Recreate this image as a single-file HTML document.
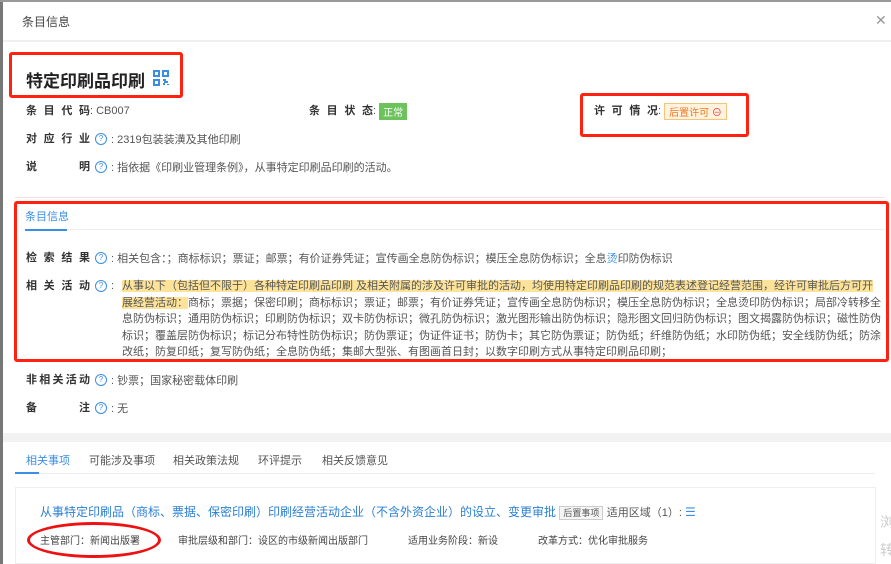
<!DOCTYPE html>
<html><head><meta charset="utf-8"><style>
*{margin:0;padding:0;box-sizing:border-box}
body{width:891px;height:564px;overflow:hidden;background:#fff;font-family:"Liberation Sans","Noto Sans CJK SC",sans-serif;font-size:11px;color:#555;position:relative}
.a{position:absolute;white-space:nowrap}
.r{position:absolute;display:flex;align-items:center;white-space:nowrap;height:14px}
.lbl{display:inline-block;width:64px;height:14px;line-height:14px;color:#333;font-weight:bold;text-align:justify;text-align-last:justify}
.q{display:inline-block;width:12px;height:12px;border:1px solid #3a8ee6;border-radius:50%;color:#3a8ee6;font-size:8px;line-height:10px;text-align:center;font-weight:normal;margin:0 4px 0 5px}
.red{position:absolute;border:3px solid #f21;border-radius:3px}
</style></head><body>
<div class="a" style="left:0;top:0;width:3px;height:564px;background:#777"></div>
<div class="a" style="left:0;top:0;width:891px;height:2px;background:#999"></div>
<div class="a" style="left:22px;top:13px;font-size:12px;color:#444">条目信息</div>
<div class="a" style="left:875px;top:12px;font-size:14px;color:#999">✕</div>
<div class="a" style="left:3px;top:40px;width:888px;height:2px;background:#f0f0f0"></div>

<div class="red" style="left:9px;top:52px;width:174px;height:46px"></div>
<div class="a" style="left:26px;top:67px;font-size:17px;font-weight:bold;color:#222">特定印刷品印刷</div>
<svg class="a" style="left:153px;top:70px" width="16" height="16" viewBox="0 0 16 16" fill="none" stroke="#3a8ee6" stroke-width="2"><rect x="1" y="1" width="5" height="5"/><rect x="10" y="1" width="5" height="5"/><rect x="1" y="10" width="5" height="5"/><path d="M10 10h2v2h3M10 14h2M15 14v1"/></svg>

<div class="r" style="left:26px;top:104px"><span class="lbl">条目代码</span>: CB007</div>
<div class="r" style="left:309px;top:104px"><span class="lbl">条目状态</span>:&nbsp;<span style="background:#6cc35b;color:#fff;padding:1px 4px;font-size:10px">正常</span></div>
<div class="red" style="left:580px;top:93px;width:169px;height:44px"></div>
<div class="r" style="left:594px;top:104px"><span class="lbl">许可情况</span>:&nbsp;<span style="background:#fff3e0;border:1px solid #f5c67a;color:#f07a20;padding:0 4px;font-size:10px">后置许可 <span style="color:#e33">⊖</span></span></div>
<div class="r" style="left:26px;top:132px"><span class="lbl">对应行业</span><span class="q">?</span>: 2319包装装潢及其他印刷</div>
<div class="r" style="left:26px;top:160px"><span class="lbl">说明</span><span class="q">?</span>: 指依据《印刷业管理条例》，从事特定印刷品印刷的活动。</div>
<div class="a" style="left:15px;top:197px;width:870px;height:1px;background:#f5e0e0"></div>

<div class="red" style="left:14px;top:201px;width:875px;height:161px"></div>
<div class="a" style="left:25px;top:208px;color:#3a8ee6">条目信息</div>
<div class="a" style="left:25px;top:229px;width:860px;height:1px;background:#eee"></div>
<div class="a" style="left:25px;top:229px;width:42px;height:2px;background:#3a8ee6"></div>
<div class="r" style="left:26px;top:251px"><span class="lbl">检索结果</span><span class="q">?</span>: 相关包含：；商标标识；票证；邮票；有价证券凭证；宣传画全息防伪标识；模压全息防伪标识；全息<span style="color:#3a8ee6">烫</span>印防伪标识</div>
<div class="r" style="left:26px;top:279px"><span class="lbl">相关活动</span><span class="q">?</span>:</div>
<div class="a" style="left:122px;top:278px;width:760px;white-space:normal;line-height:16.5px"><span style="background:#fde39a">从事以下（包括但不限于）各种特定印刷品印刷 及相关附属的涉及许可审批的活动，均使用特定印刷品印刷的规范表述登记经营范围，经许可审批后方可开展经营活动：</span>商标；票据；保密印刷；商标标识；票证；邮票；有价证券凭证；宣传画全息防伪标识；模压全息防伪标识；全息烫印防伪标识；局部冷转移全息防伪标识；通用防伪标识；印刷防伪标识；双卡防伪标识；微孔防伪标识；激光图形输出防伪标识；隐形图文回归防伪标识；图文揭露防伪标识；磁性防伪标识；覆盖层防伪标识；标记分布特性防伪标识；防伪票证；伪证件证书；防伪卡；其它防伪票证；防伪纸；纤维防伪纸；水印防伪纸；安全线防伪纸；防涂改纸；防复印纸；复写防伪纸；全息防伪纸；集邮大型张、有图画首日封；以数字印刷方式从事特定印刷品印刷；</div>

<div class="r" style="left:26px;top:373px"><span class="lbl">非相关活动</span><span class="q">?</span>: 钞票；国家秘密载体印刷</div>
<div class="r" style="left:26px;top:401px"><span class="lbl">备注</span><span class="q">?</span>: 无</div>

<div class="a" style="left:3px;top:433px;width:888px;height:9px;background:#f2f2f2"></div>
<div class="a" style="left:26px;top:452px;color:#3a8ee6">相关事项</div>
<div class="a" style="left:89px;top:452px;color:#555">可能涉及事项</div>
<div class="a" style="left:173px;top:452px;color:#555">相关政策法规</div>
<div class="a" style="left:258px;top:452px;color:#555">环评提示</div>
<div class="a" style="left:322px;top:452px;color:#555">相关反馈意见</div>
<div class="a" style="left:15px;top:473px;width:860px;height:1px;background:#eee"></div>
<div class="a" style="left:15px;top:472px;width:24px;height:2px;background:#3a8ee6"></div>

<div class="a" style="left:15px;top:487px;width:861px;height:77px;border:1px solid #eee"></div>
<div class="a" style="left:40px;top:503px;font-size:12px;color:#2a7fd4">从事特定印刷品（商标、票据、保密印刷）印刷经营活动企业（不含外资企业）的设立、变更审批 <span style="font-size:9px;color:#555;border:1px solid #ccc;background:#f5f5f5;padding:1px 3px">后置事项</span> <span style="font-size:11px;color:#555">适用区域（1）: </span><span style="color:#3a8ee6">☰</span></div>
<div class="a" style="left:40px;top:532px;font-size:10px;color:#444">主管部门：新闻出版署</div>
<div class="a" style="left:178px;top:532px;font-size:10px;color:#444">审批层级和部门：设区的市级新闻出版部门</div>
<div class="a" style="left:408px;top:532px;font-size:10px;color:#444">适用业务阶段：新设</div>
<div class="a" style="left:538px;top:532px;font-size:10px;color:#444">改革方式：优化审批服务</div>
<div class="a" style="left:27px;top:522px;width:134px;height:36px;border:3px solid #e11;border-radius:50%"></div>
<div class="a" style="left:880px;top:512px;font-size:14px;color:#ccc">浏</div>
<div class="a" style="left:880px;top:540px;font-size:14px;color:#ccc">转</div>
</body></html>
